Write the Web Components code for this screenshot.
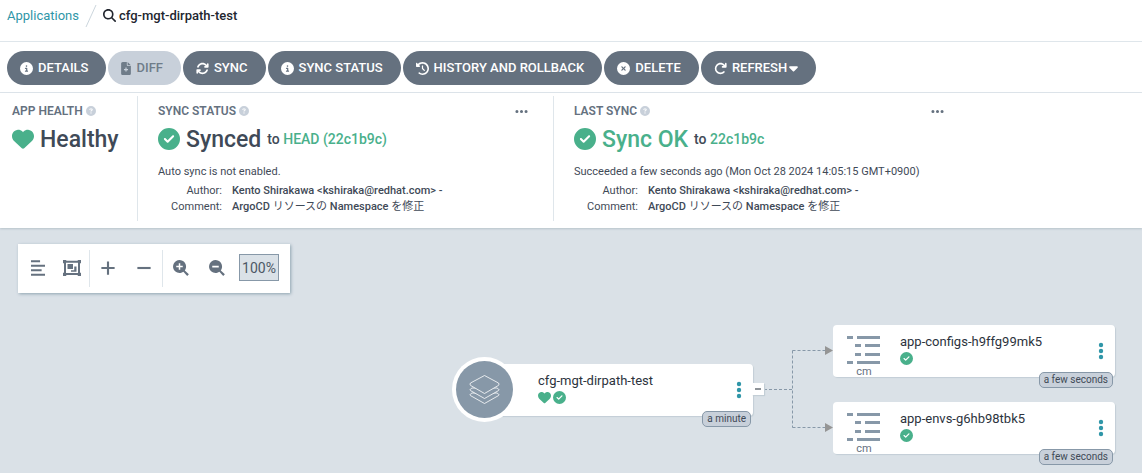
<!DOCTYPE html>
<html lang="en">
<head>
<meta charset="utf-8">
<title>cfg-mgt-dirpath-test - Applications</title>
<style>
  html, body { margin: 0; min-height: 100%; }
  body {
    font-family: Roboto, "Noto Sans CJK JP", sans-serif;
    font-size: 13px; line-height: 16px; color: #3f4a57; background: #fff;
    --slate: #65717f; --slate-light: #8798a8; --line: #dfe6eb;
    --green: #49b08b; --teal: #2f96a8; --canvas: #dae1e7; --pale: #c8d0da;
  }
</style>
</head>
<body>
<app-page></app-page>

<script>
const DISC = 'M256 512A256 256 0 1 0 256 0a256 256 0 1 0 0 512z';
const ICONS = {
  info: [512, DISC + 'M216 336h24V272H216c-13.3 0-24-10.7-24-24s10.7-24 24-24h48c13.3 0 24 10.7 24 24v88h8c13.3 0 24 10.7 24 24s-10.7 24-24 24H216c-13.3 0-24-10.7-24-24s10.7-24 24-24zm40-208a32 32 0 1 1 0 64 32 32 0 1 1 0-64z'],
  check: [512, DISC + 'M369 209L241 337c-9.4 9.4-24.6 9.4-33.9 0l-64-64c-9.4-9.4-9.4-24.6 0-33.9s24.6-9.4 33.9 0l47 47L335 175c9.4-9.4 24.6-9.4 33.9 0s9.4 24.6 0 33.9z'],
  times: [512, DISC + 'M175 175c9.4-9.4 24.6-9.4 33.9 0l47 47 47-47c9.4-9.4 24.6-9.4 33.9 0s9.4 24.6 0 33.9l-47 47 47 47c9.4 9.4 9.4 24.6 0 33.9s-24.6 9.4-33.9 0l-47-47-47 47c-9.4 9.4-24.6 9.4-33.9 0s-9.4-24.6 0-33.9l47-47-47-47c-9.4-9.4-9.4-24.6 0-33.9z'],
  question: [512, DISC + 'M169.8 165.3c7.9-22.3 29.1-37.3 52.8-37.3h58.3c34.9 0 63.1 28.3 63.1 63.1c0 22.6-12.1 43.5-31.7 54.8L280 264.4c-.2 13-10.9 23.6-24 23.6c-13.3 0-24-10.7-24-24V250.5c0-8.6 4.6-16.5 12.1-20.8l44.3-25.4c4.7-2.7 7.6-7.7 7.6-13.1c0-8.4-6.8-15.1-15.1-15.1H222.6c-3.4 0-6.4 2.1-7.5 5.3l-.4 1.2c-4.4 12.5-18.2 19-30.6 14.6s-19-18.2-14.6-30.6l.4-1.2zM224 352a32 32 0 1 1 64 0 32 32 0 1 1 -64 0z'],
  heart: [512, 'M47.6 300.4L228.3 469.1c7.5 7 17.4 10.9 27.7 10.9s20.2-3.9 27.7-10.9L464.4 300.4c30.4-28.3 47.6-68 47.6-109.5v-5.8c0-69.9-50.5-129.5-119.4-141C347 36.5 300.6 51.4 268 84L256 96 244 84c-32.6-32.6-79-47.5-124.6-39.9C50.5 55.6 0 115.2 0 185.1v5.8c0 41.5 17.2 81.2 47.6 109.5z'],
  search: [512, 'M416 208c0 45.9-14.9 88.3-40 122.7L502.6 457.4c12.5 12.5 12.5 32.8 0 45.3s-32.8 12.5-45.3 0L330.7 376c-34.4 25.2-76.8 40-122.7 40C93.1 416 0 322.9 0 208S93.1 0 208 0S416 93.1 416 208zM208 352a144 144 0 1 0 0-288 144 144 0 1 0 0 288z'],
  history: [512, 'M75 75L41 41C25.9 25.9 0 36.6 0 57.9V168c0 13.3 10.7 24 24 24H134.1c21.4 0 32.1-25.9 17-41l-30.8-30.8C155 85.5 203 64 256 64c106 0 192 86 192 192s-86 192-192 192c-40.8 0-78.6-12.7-109.7-34.4c-14.5-10.1-34.4-6.6-44.6 7.9s-6.6 34.4 7.9 44.6C151.2 495 201.7 512 256 512c141.4 0 256-114.6 256-256S397.4 0 256 0C185.3 0 121.3 28.7 75 75zm181 53c-13.3 0-24 10.7-24 24V256c0 6.4 2.5 12.5 7 17l72 72c9.4 9.4 24.6 9.4 33.9 0s9.4-24.6 0-33.9l-65-65V152c0-13.3-10.7-24-24-24z'],
  sync: [512, 'M105.1 202.6c7.7-21.8 20.2-42.3 37.8-59.8c62.5-62.5 163.8-62.5 226.3 0L386.3 160H352c-17.7 0-32 14.3-32 32s14.3 32 32 32H463.9c17.7 0 32-14.3 32-32V80c0-17.7-14.3-32-32-32s-32 14.3-32 32v35.2L414.4 97.6c-87.5-87.5-229.3-87.5-316.8 0C73.2 122 55.6 150.7 44.8 181.4c-5.9 16.7 2.9 34.9 19.5 40.8s34.9-2.9 40.8-19.5zM39 289.3c-5 1.5-9.8 4.2-13.7 8.2c-4 4-6.7 8.8-8.1 14c-.3 1.2-.6 2.5-.8 3.8c-.3 1.7-.4 3.4-.4 5.1V432c0 17.7 14.3 32 32 32s32-14.3 32-32V396.9l17.6 17.5c87.5 87.4 229.3 87.4 316.7 0c24.4-24.4 42.1-53.1 52.9-83.7c5.9-16.7-2.9-34.9-19.5-40.8s-34.9 2.9-40.8 19.5c-7.7 21.8-20.2 42.3-37.8 59.8c-62.5 62.5-163.8 62.5-226.3 0l-.1-.1L125.6 352H160c17.7 0 32-14.3 32-32s-14.3-32-32-32H48.4c-1.6 0-3.2 .1-4.8 .3s-3.1 .5-4.6 1z'],
  redo: [512, 'M386.3 160H336c-17.7 0-32 14.3-32 32s14.3 32 32 32H464c17.7 0 32-14.3 32-32V64c0-17.7-14.3-32-32-32s-32 14.3-32 32v51.2L414.4 97.6c-87.5-87.5-229.3-87.5-316.8 0s-87.5 229.3 0 316.8s229.3 87.5 316.8 0c12.5-12.5 12.5-32.8 0-45.3s-32.8-12.5-45.3 0c-62.5 62.5-163.8 62.5-226.3 0s-62.5-163.8 0-226.3s163.8-62.5 226.3 0L386.3 160z'],
  file: [384, 'M64 0C28.7 0 0 28.7 0 64V448c0 35.3 28.7 64 64 64H320c35.3 0 64-28.7 64-64V160H256c-17.7 0-32-14.3-32-32V0H64zM256 0V128H384L256 0zM168 216h48v56h56v48h-56v56h-48v-56h-56v-48h56z'],
  caret: [320, 'M137.4 374.6c12.5 12.5 32.8 12.5 45.3 0l128-128c9.2-9.2 11.9-22.9 6.9-34.9s-16.6-19.8-29.6-19.8L32 192c-12.9 0-24.6 7.8-29.6 19.8s-2.2 25.7 6.9 34.9l128 128z'],
  dots: [512, 'M16 256a60 60 0 1 0 120 0a60 60 0 1 0 -120 0zM196 256a60 60 0 1 0 120 0a60 60 0 1 0 -120 0zM376 256a60 60 0 1 0 120 0a60 60 0 1 0 -120 0z'],
  align: [512, 'M32 10h290v62H32zM32 154h448v62H32zM32 298h340v62H32zM32 442h448v62H32z'],
  group: [576, 'M0 0H104V24H472V0H576V104H544V408H576V512H472V480H104V512H0V408H32V104H0zM96 88V416H480V88zM144 128H320V288H144zM360 208H432V376H256V328H360z'],
  plus: [512, 'M222 44h68v178h178v68H290v178h-68V290H44v-68h178z'],
  minus: [512, 'M44 222h424v68H44z'],
  zoomin: [512, 'M508 454L378 332A208 208 0 1 0 332 378L454 508zM184 104h48v80h80v48h-80v80h-48v-80h-80v-48h80z'],
  zoomout: [512, 'M508 454L378 332A208 208 0 1 0 332 378L454 508zM104 180h208v56H104z']
};

/* Base class: renders the subclass's markup into an open shadow root. */
class Base extends HTMLElement {
  constructor() {
    super();
    const t = document.createElement('template');
    t.innerHTML = this.markup();
    this.attachShadow({ mode: 'open' }).append(t.content.cloneNode(true));
  }
}

customElements.define('ui-icon', class extends Base {
  markup() {
    const [w, d] = ICONS[this.getAttribute('name')];
    return `<style>
      :host { display: inline-flex; flex: none; width: 13px; height: 13px; }
      :host([name=file]) { width: 10px; }
      svg { width: 100%; height: 100%; fill: currentColor; }
    </style><svg viewBox="0 0 ${w} 512" aria-hidden="true"><path fill-rule="evenodd" d="${d}"/></svg>`;
  }
});

customElements.define('crumb-bar', class extends Base {
  markup() {
    return `<style>
      :host { display: block; border-bottom: 1px solid var(--line); }
      nav { display: flex; align-items: center; height: 31px; padding: 0 7px 10px; }
      a { color: var(--teal); text-decoration: none; }
      svg { width: 12px; height: 24px; margin: 0 6px; flex: none; }
      strong { display: flex; gap: 3px; align-items: center; font-weight: 500; color: #22262f; }
    </style>
    <nav aria-label="Breadcrumb"><a href="#applications">Applications</a>
      <svg viewBox="0 0 12 24" aria-hidden="true"><path d="M11 1L1 23" stroke="#ccd6dd" fill="none"/></svg>
      <strong><ui-icon name="search"></ui-icon><span>cfg-mgt-dirpath-test</span></strong></nav>`;
  }
});

customElements.define('action-button', class extends Base {
  markup() {
    return `<style>
      :host { display: block; }
      button { display: flex; align-items: center; gap: 5px; height: 34px; margin: 0;
        padding: 0 18px 0 13px; border: 0; border-radius: 17px; font: inherit; font-weight: 500;
        color: #fff; background: var(--slate); white-space: nowrap; cursor: pointer; }
      button:disabled { background: var(--pale); color: #6f7c89; cursor: default; }
      span { display: flex; align-items: center; gap: 2px; }
    </style>
    <button type="button" ${this.hasAttribute('disabled') ? 'disabled' : ''}>
      <ui-icon name="${this.getAttribute('icon')}"></ui-icon><span><slot></slot></span></button>`;
  }
});

customElements.define('action-bar', class extends Base {
  markup() {
    return `<style>
      :host { display: flex; flex-wrap: wrap; gap: 2px; padding: 9px 7px 7px; border-bottom: 1px solid var(--line); }
      .caret { width: 9px; height: 14px; }
    </style>
    <action-button icon="info">DETAILS</action-button>
    <action-button icon="file" disabled>DIFF</action-button>
    <action-button icon="sync">SYNC</action-button>
    <action-button icon="info">SYNC STATUS</action-button>
    <action-button icon="history">HISTORY AND ROLLBACK</action-button>
    <action-button icon="times">DELETE</action-button>
    <action-button icon="redo">REFRESH<ui-icon class="caret" name="caret"></ui-icon></action-button>`;
  }
});

customElements.define('status-panel', class extends Base {
  markup() {
    return `<style>
      :host { display: block; box-sizing: border-box; padding: 7px 20px 6px; }
      header { display: flex; align-items: center; gap: 3px; }
      h2 { margin: 0; font-size: 12px; line-height: 16px; font-weight: 600; color: var(--slate); }
      header ui-icon { width: 10px; height: 10px; color: var(--pale); }
      button { margin: 0 5px 0 auto; padding: 0; border: 0; background: none; color: var(--slate); display: flex; }
      button ui-icon { color: inherit; width: 13px; height: 13px; }
      .state { display: flex; align-items: center; height: 40px; }
    </style>
    <header><h2>${this.getAttribute('heading')}</h2><ui-icon name="question"></ui-icon>
      ${this.hasAttribute('menu') ? '<button type="button" aria-label="More"><ui-icon name="dots"></ui-icon></button>' : ''}</header>
    <div class="state"><slot name="state"></slot></div><slot></slot>`;
  }
});

customElements.define('state-label', class extends Base {
  markup() {
    return `<style>
      :host { display: flex; align-items: center; gap: 6px; font-size: 23px; line-height: 28px; font-weight: 500; white-space: nowrap; }
      ui-icon { width: 22px; height: 22px; color: var(--green); }
      span { padding-top: 2px; }
    </style><ui-icon name="${this.getAttribute('icon')}"></ui-icon><span><slot></slot></span>`;
  }
});

customElements.define('commit-info', class extends Base {
  markup() {
    return `<style>
      :host { display: block; font-size: 11px; line-height: 16px; }
      dl { display: grid; grid-template-columns: 64px 1fr; column-gap: 10px; margin: 0; }
      dt { text-align: right; } dd { margin: 0; font-weight: 500; white-space: nowrap; }
      p { margin: 5px 0 3px; }
    </style><p><slot></slot></p>
    <dl><dt>Author:</dt><dd>Kento Shirakawa &lt;kshiraka@redhat.com&gt; -</dd>
    <dt>Comment:</dt><dd><slot name="comment"></slot></dd></dl>`;
  }
});

customElements.define('status-bar', class extends Base {
  markup() {
    return `<style>
      :host { display: flex; padding: 3px 0 7px; position: relative; box-shadow: 0 1px 2px #b8c3cb; background: #fff; }
      status-panel + status-panel { border-left: 1px solid var(--line); flex: 0 1 416px; }
      .health { flex: 0 0 137px; padding-left: 12px; padding-right: 0; }
      .to { font-size: 14px; font-weight: 500; margin-left: 6px; white-space: nowrap; }
      a { color: var(--green); text-decoration: none; }
      .ok { color: var(--green); }
      .cjk { font-weight: 400; }
    </style>
    <status-panel class="health" heading="APP HEALTH"><state-label slot="state" icon="heart">Healthy</state-label></status-panel>
    <status-panel heading="SYNC STATUS" menu>
      <state-label slot="state" icon="check">Synced</state-label>
      <span class="to" slot="state">to <a href="#head">HEAD (22c1b9c)</a></span>
      <commit-info>Auto sync is not enabled.<span slot="comment">ArgoCD <span class="cjk">リソースの</span> Namespace <span class="cjk">を修正</span></span></commit-info>
    </status-panel>
    <status-panel heading="LAST SYNC" menu>
      <state-label slot="state" class="ok" icon="check">Sync OK</state-label>
      <span class="to" slot="state">to <a href="#rev">22c1b9c</a></span>
      <commit-info>Succeeded a few seconds ago (Mon Oct 28 2024 14:05:15 GMT+0900)<span slot="comment">ArgoCD <span class="cjk">リソースの</span> Namespace <span class="cjk">を修正</span></span></commit-info>
    </status-panel>`;
  }
});

customElements.define('graph-tools', class extends Base {
  markup() {
    const b = (n, l) => `<button type="button" aria-label="${l}"><ui-icon name="${n}"></ui-icon></button>`;
    return `<style>
      :host { display: inline-flex; align-items: center; padding: 6px 11px 6px 3px; background: #fff; color: var(--slate);
        box-shadow: 1px 1px 3px #8fa4b1; }
      div { display: flex; align-items: center; box-sizing: border-box; height: 37px; padding-bottom: 2px; }
      div + div { border-left: 1px solid var(--line); }
      button { display: flex; justify-content: center; width: 36px; padding: 0; border: 0; background: none; color: inherit; }
      .layout button { width: 34px; }
      ui-icon { width: 16px; height: 16px; }
      ui-icon[name=group] { width: 18px; }
      output { box-sizing: border-box; width: 40px; height: 27px; margin-left: 4px; border: 1px solid var(--slate-light);
        background: var(--canvas); font-size: 14px; line-height: 26px; text-align: center; color: #4d5865; }
    </style>
    <div class="layout">${b('align', 'Align')}${b('group', 'Group nodes')}</div>
    <div>${b('plus', 'Expand all')}${b('minus', 'Collapse all')}</div>
    <div>${b('zoomin', 'Zoom in')}${b('zoomout', 'Zoom out')}<output aria-label="Zoom">100%</output></div>`;
  }
});

customElements.define('resource-node', class extends Base {
  markup() {
    const app = this.getAttribute('kind') === 'app';
    const pic = app
      ? `<svg class="disc" viewBox="0 0 65 65"><circle cx="32.5" cy="32.5" r="32.5" fill="#fff"/><circle cx="32.5" cy="32.5" r="28.5" fill="#8798a8"/>
         <g fill="#8798a8" stroke="#fff" stroke-width=".8" stroke-linejoin="round"><path d="M20 36l-1.500 1q-1 .8 0 1.600L32.500 46.500 46.500 38.600q1-.8 0-1.600L45 36z"/><path d="M20 31l-1.500 1q-1 .8 0 1.600L32.500 41.500 46.500 33.600q1-.8 0-1.600L45 31z"/><path d="M32.500 18.500L46.500 26q1 1 0 2.400L32.500 36.500 18.500 28.400q-1-1.400 0-2.400z"/></g></svg>`
      : `<svg class="map" viewBox="0 0 34 30"><path fill="#8798a8" d="M0 0h6v3H0zM10 0h23v3H10zM8 8h6v3H8zM18 8h15v3H18zM8 17h6v3H8zM18 17h15v3H18zM0 25h6v3H0zM10 25h23v3H10z"/></svg><span>cm</span>`;
    return `<style>
      :host { position: absolute; box-sizing: border-box; display: flex; width: 282px; height: 52px;
        background: #fff; border-radius: 4px; box-shadow: 1px 1px 1px #c3ced6; color: #2c333d; }
      figure { position: relative; flex: none; width: 62px; margin: 0 5px 0 0; padding-top: 11px; text-align: center;
        display: flex; flex-direction: column; align-items: center; color: var(--slate); font-size: 11px; line-height: 16px; box-sizing: border-box; }
      figure span { margin-top: -2px; }
      .map { width: 34px; height: 30px; flex: none; }
      .disc { position: absolute; width: 65px; height: 65px; left: -19px; top: -7px; }
      .body { flex: 1; padding-top: 9px; }
      .marks { display: flex; gap: 2px; padding-top: 2px; color: var(--green); }
      .menu { align-self: center; display: flex; padding: 0 8px 0 0; border: 0; background: none; }
      .menu svg { width: 12px; height: 18px; fill: var(--teal); }
      .age { position: absolute; right: 2px; bottom: -11px; padding: 0 4px; border: 1px solid var(--slate-light);
        border-radius: 5px; background: var(--pale); font-size: 10px; line-height: 14px; color: #3f4a57; }
    </style>
    <figure>${pic}</figure>
    <div class="body"><div><slot></slot></div>
      <div class="marks">${app ? '<ui-icon name="heart"></ui-icon>' : ''}<ui-icon name="check"></ui-icon></div></div>
    <button class="menu" type="button" aria-label="Actions"><svg viewBox="0 0 12 18"><circle cx="6" cy="3" r="2.2"/><circle cx="6" cy="9" r="2.2"/><circle cx="6" cy="15" r="2.2"/></svg></button>
    <div class="age">${this.getAttribute('age')}</div>`;
  }
});

customElements.define('resource-graph', class extends Base {
  markup() {
    return `<style>
      :host { display: block; flex: 1; min-height: 245px; box-sizing: border-box; padding: 16px 18px; position: relative; background: var(--canvas); overflow: hidden; }
      .edges { position: absolute; left: 752px; top: 110px; width: 82px; height: 100px; }
      .fold { position: absolute; left: 752px; top: 155px; width: 12px; height: 12px; padding: 0; border: 0; background: #fff; box-shadow: 1px 1px 1px #c3ced6;
        display: flex; align-items: center; justify-content: center; }
      .fold i { width: 6px; height: 2px; background: #8f9499; }
    </style>
    <graph-tools></graph-tools>
    <svg class="edges" viewBox="0 0 82 100" aria-hidden="true">
      <path d="M12 51.5H40.500M40.500 12.500V89.500M40.500 12.500H76M40.500 89.500H76" fill="none" stroke="#8798a8" stroke-dasharray="3 2"/>
      <path d="M73 8l8 4.500-8 4.500zM73 85l8 4.500-8 4.500z" fill="#959595"/></svg>
    <resource-node kind="app" age="a minute" style="left:471px;top:136px">cfg-mgt-dirpath-test</resource-node>
    <button class="fold" type="button" aria-label="Collapse"><i></i></button>
    <resource-node kind="cm" age="a few seconds" style="left:833px;top:97px">app-configs-h9ffg99mk5</resource-node>
    <resource-node kind="cm" age="a few seconds" style="left:833px;top:174px">app-envs-g6hb98tbk5</resource-node>`;
  }
});

customElements.define('app-page', class extends Base {
  markup() {
    return `<style>:host { display: flex; flex-direction: column; min-height: 100vh; }
      status-bar { z-index: 1; }</style>
    <crumb-bar></crumb-bar><action-bar></action-bar><status-bar></status-bar><resource-graph></resource-graph>`;
  }
});
</script>
</body>
</html>
